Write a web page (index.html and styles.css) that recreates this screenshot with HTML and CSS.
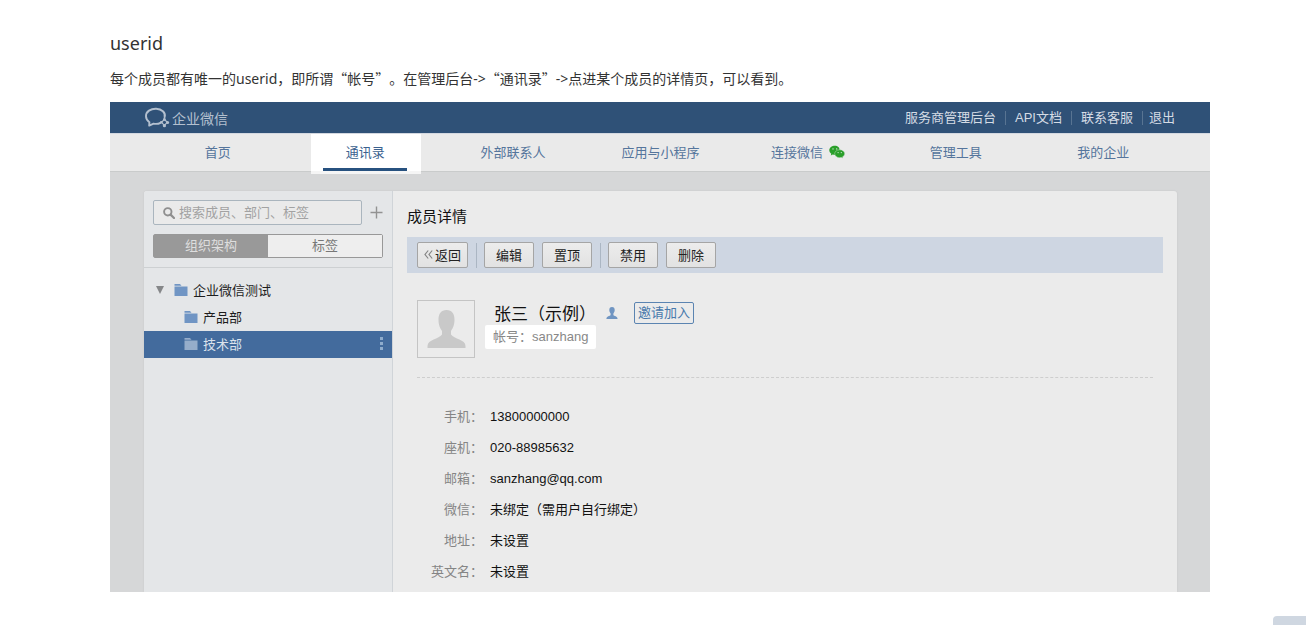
FILE: index.html
```html
<!DOCTYPE html>
<html lang="zh-CN">
<head>
<meta charset="utf-8">
<title>userid</title>
<link rel="stylesheet" href="styles.css">
</head>
<body>
<article class="doc">
  <h1 class="doc-title">userid</h1>
  <p class="doc-text">每个成员都有唯一的<span class="latin">userid</span>，即所谓“帐号”。在管理后台<span class="latin">-&gt;</span>“通讯录”<span class="latin">-&gt;</span>点进某个成员的详情页，可以看到。</p>

  <section class="console">
    <header class="topbar">
      <div class="logo">
        <svg class="logo-icon" viewBox="0 0 26 22" width="26" height="22" aria-hidden="true">
          <path d="M16.500 15.800C14.500 16.900 12 17.100 9.600 16.700L5.200 18.600L5.400 15.200C.9 12.200 .9 6.400 5 3.600C9 1 15.500 1.100 18.900 4.300C20.700 6 21.300 8.300 20.600 10.300" fill="none" stroke="currentColor" stroke-width="1.900" stroke-linejoin="round" stroke-linecap="round"/>
          <path d="M20.500 12.400L23.200 15.300L20.500 18.300L17.500 15.300Z" fill="none" stroke="currentColor" stroke-width="1.200"/>
          <g fill="currentColor"><circle cx="20.400" cy="12.500" r="1.400"/><circle cx="23.600" cy="15.400" r="1.500"/><circle cx="20.400" cy="18.700" r="1.600"/><circle cx="17.200" cy="15.300" r="1.300"/></g>
        </svg>
        <span>企业微信</span>
      </div>
      <nav class="links">
        <a href="#">服务商管理后台</a><a href="#">API文档</a><a href="#">联系客服</a><a href="#">退出</a>
      </nav>
    </header>

    <nav class="tabs">
      <a class="tab" href="#">首页</a>
      <a class="tab active" href="#"><span class="tab-label">通讯录</span></a>
      <a class="tab" href="#">外部联系人</a>
      <a class="tab" href="#">应用与小程序</a>
      <a class="tab" href="#">连接微信
        <svg viewBox="0 0 16 14" width="16" height="14" aria-hidden="true">
          <path d="M6 .8C2.700.8.300 2.800.300 5.300C.300 6.800 1.100 8 2.300 8.800L1.800 10.500L3.700 9.500L6 9.900L10.500 5C10.700 2.700 8.700.8 6 .8Z" fill="#2a9f2a"/>
          <path d="M10.700 4.800C7.900 4.800 5.700 6.500 5.700 8.700C5.700 11 8 12.700 10.700 12.700L12.400 12.400L14 13.300L13.600 11.800C14.900 11 15.700 9.900 15.700 8.700C15.700 6.500 13.500 4.800 10.700 4.800Z" fill="#2a9f2a" stroke="#eaeaea" stroke-width=".4"/>
          <g fill="#dceadc"><circle cx="4" cy="3.900" r=".7"/><circle cx="7.700" cy="3.900" r=".7"/><circle cx="9.100" cy="7.600" r=".6"/><circle cx="12.300" cy="7.600" r=".6"/></g>
        </svg>
      </a>
      <a class="tab" href="#">管理工具</a>
      <a class="tab" href="#">我的企业</a>
    </nav>

    <div class="stage">
      <div class="panel">
        <aside class="side">
          <div class="side-head">
            <div class="search-row">
              <label class="search">
                <svg viewBox="0 0 12 12" width="12" height="12" aria-hidden="true"><circle cx="4.800" cy="4.800" r="3.700" fill="none" stroke="#8f8f8f" stroke-width="1.900"/><path d="M7.600 7.600L11 11" stroke="#8f8f8f" stroke-width="2.200" stroke-linecap="round"/></svg>
                <input type="text" placeholder="搜索成员、部门、标签" aria-label="搜索成员、部门、标签">
              </label>
              <button class="add" type="button" aria-label="添加"><svg viewBox="0 0 13 13" width="13" height="13"><path d="M6.500 .5V12.500M.5 6.500H12.500" stroke="#929292" stroke-width="1.400"/></svg></button>
            </div>
            <div class="segment">
              <button class="seg on" type="button">组织架构</button><button class="seg" type="button">标签</button>
            </div>
          </div>
          <ul class="tree">
            <li class="node root">
              <svg class="caret" viewBox="0 0 8 8" width="8" height="8" aria-hidden="true"><path d="M0 0H8L4 8Z" fill="#858789"/></svg>
              <svg class="folder" viewBox="0 0 14 12" width="14" height="12" aria-hidden="true"><path d="M.5 0H6L7.500 1.800H.5ZM.5 2.600H13.500V12H.5Z"/></svg>
              <span>企业微信测试</span>
            </li>
            <li class="node">
              <svg class="folder" viewBox="0 0 14 12" width="14" height="12" aria-hidden="true"><path d="M.5 0H6L7.500 1.800H.5ZM.5 2.600H13.500V12H.5Z"/></svg>
              <span>产品部</span>
            </li>
            <li class="node selected">
              <svg class="folder" viewBox="0 0 14 12" width="14" height="12" aria-hidden="true"><path d="M.5 0H6L7.500 1.800H.5ZM.5 2.600H13.500V12H.5Z"/></svg>
              <span>技术部</span>
              <button class="more" type="button" aria-label="更多"><svg viewBox="0 0 3 13" width="3" height="13"><path d="M0 0H3V3H0ZM0 5H3V8H0ZM0 10H3V13H0Z" fill="#8faccc"/></svg></button>
            </li>
          </ul>
        </aside>

        <main class="detail">
          <h2 class="detail-title">成员详情</h2>
          <div class="toolbar">
            <button class="btn" type="button"><svg viewBox="0 0 9 9" width="9" height="9" aria-hidden="true"><path d="M4.200 .5L1 4.500L4.200 8.500M8.200 .5L5 4.500L8.200 8.500" fill="none" stroke="#858585" stroke-width="1.200"/></svg>返回</button>
            <i class="bar"></i>
            <button class="btn" type="button">编辑</button>
            <button class="btn" type="button">置顶</button>
            <i class="bar"></i>
            <button class="btn" type="button">禁用</button>
            <button class="btn" type="button">删除</button>
          </div>
          <div class="profile">
            <div class="avatar"><svg viewBox="0 0 56 56" width="56" height="56" aria-hidden="true"><path d="M28.500 9C34 9 36.500 13 36.500 18.500C36.500 24 35 27 33 30V33.500C36 38 47.500 38.500 47.500 45V47H9.500V45C9.500 38.500 21 38 24 33.500V30C22 27 20.500 24 20.500 18.500C20.500 13 23 9 28.500 9Z" fill="#c9c9c9"/></svg></div>
            <div class="who">
              <div class="name-row">
                <span class="name">张三（示例）</span>
                <svg viewBox="0 0 12 12" width="12" height="12" aria-hidden="true"><path d="M6 0C7.900 0 8.700 1.300 8.700 3C8.700 4.800 8 5.700 7.400 6.500V8C8 9.300 11.600 9 11.600 12H.4C.4 9 4 9.300 4.600 8V6.500C4 5.700 3.300 4.800 3.300 3C3.300 1.300 4.100 0 6 0Z" fill="#7095c2"/></svg>
                <button class="invite" type="button">邀请加入</button>
              </div>
              <div class="account">帐号：sanzhang</div>
            </div>
          </div>
          <dl class="info">
            <dt>手机：</dt><dd>13800000000</dd>
            <dt>座机：</dt><dd>020-88985632</dd>
            <dt>邮箱：</dt><dd>sanzhang@qq.com</dd>
            <dt>微信：</dt><dd>未绑定（需用户自行绑定）</dd>
            <dt>地址：</dt><dd>未设置</dd>
            <dt>英文名：</dt><dd>未设置</dd>
          </dl>
        </main>
      </div>
    </div>
  </section>
</article>
<button class="corner" type="button" aria-label="反馈"></button>
</body>
</html>
```

FILE: styles.css
```css
* { box-sizing: border-box; }
body {
  margin: 0;
  background: #fff;
  color: #333;
  font-family: "Liberation Sans", "Noto Sans CJK SC", sans-serif;
  font-size: 13px;
}
a { color: inherit; text-decoration: none; }
button, input { font: inherit; color: inherit; padding: 0; margin: 0; border: 0; background: none; }
svg { display: block; flex: none; }

.doc { padding: 30px 96px 0 110px; }
.doc-title {
  margin: 0;
  font: 400 18px/26px "Noto Sans", sans-serif;
}
.doc-text {
  margin: 11px 0 12px;
  font: 14px/22px "Noto Sans CJK SC", sans-serif;
  text-spacing-trim: space-all;
}
.latin { font-family: "Noto Sans", sans-serif; }

.console { background: #d6d7d8; }

.topbar {
  display: flex;
  justify-content: space-between;
  align-items: center;
  height: 31px;
  padding: 0 35px 0 34px;
  background: #2f5177;
  color: #d5dce5;
}
.logo { display: flex; align-items: center; gap: 2px; font-size: 14px; color: #b4c0cf; }
.links { display: flex; align-items: center; }
.links a { line-height: 14px; }
.links a + a { margin-left: 9px; padding-left: 9px; border-left: 1px solid #587492; }
.links a:last-child { padding-left: 6px; }

.tabs {
  display: flex;
  height: 39px;
  padding: 0 33px 0 34px;
  background: #eaeaea;
  border-top: 1px solid #d3d8e0;
  border-bottom: 1px solid #c9cbcb;
  color: #55759c;
}
.tab { flex: 1; display: flex; justify-content: center; align-items: center; gap: 6px; padding-bottom: 2px; }
.tab.active { padding: 0; color: #3b628f; }
.tab-label {
  z-index: 1;
  display: flex;
  justify-content: center;
  align-items: center;
  width: 84px;
  height: 37px;
  border-bottom: 3px solid #27517f;
  padding-top: 1px;
  background: #fff;
  box-shadow: 14px 0 #fff, -12px 0 #fff, 14px 3px #f5f5f5, -12px 3px #f5f5f5;
}

.stage { padding: 19px 33px 0 34px; }
.panel {
  display: flex;
  background: #ebebeb;
  border-radius: 3px 3px 0 0;
  box-shadow: 0 0 2px #c4c5c6;
}
.side {
  width: 249px;
  border-right: 1px solid #d0d4d8;
  border-radius: 3px 0 0 0;
  background: #e4e6e8;
}
.side-head { padding: 9px; border-bottom: 1px solid #cdd0d2; }
.search-row { display: flex; align-items: center; gap: 8px; }
.search {
  display: flex;
  align-items: center;
  gap: 4px;
  width: 209px;
  height: 25px;
  padding-left: 9px;
  border: 1px solid #aab5be;
  border-radius: 2px;
  background: #eaeaea;
}
.search input { flex: 1; min-width: 0; outline: 0; }
.search input::placeholder { color: #a2a2a2; opacity: 1; }
.segment {
  display: flex;
  height: 24px;
  margin-top: 9px;
  border: 1px solid #989898;
  border-radius: 2px;
}
.seg { flex: 1; line-height: 22px; color: #777; background: #eee; }
.seg.on { background: #999; color: #dedede; }

.tree { margin: 0; padding: 9px 0 0; list-style: none; }
.node {
  display: flex;
  align-items: center;
  gap: 5px;
  height: 27px;
  padding: 0 9px 2px 40px;
  color: #1d1d1d;
}
.root { padding-left: 12px; }
.caret { margin-right: 5px; }
.folder { fill: #7095c4; }
.selected { background: #436b9d; color: #dbe2eb; }
.selected .folder { fill: #96adca; }
.more { margin-left: auto; }

.detail { flex: 1; padding: 15px 14px 5px; }
.detail-title { margin: 0; color: #111; font-size: 15px; font-weight: 400; line-height: 22px; }
.toolbar {
  display: flex;
  align-items: center;
  gap: 8px;
  height: 36px;
  margin-top: 9px;
  padding: 0 10px;
  background: #ced6e2;
}
.btn {
  display: flex;
  justify-content: center;
  align-items: center;
  gap: 2px;
  min-width: 50px;
  height: 26px;
  border: 1px solid #a5a5a5;
  border-radius: 2px;
  background: linear-gradient(#ececec, #e2e2e2);
  color: #222;
  padding: 0 6px 2px;
}
.bar { width: 0; height: 25px; border-left: 1px solid #abb6c3; margin-right: -1px; }

.profile {
  display: flex;
  margin: 0 10px;
  padding: 27px 0 19px;
  border-bottom: 1px dashed #cecece;
}
.avatar { align-self: flex-start; border: 1px solid #c4c4c4; }
.who { padding-left: 10px; }
.name-row { display: flex; align-items: center; height: 25px; padding-left: 9px; gap: 10px; }
.name { color: #111; font-size: 17px; }
.invite {
  height: 22px;
  margin-left: 6px;
  padding: 0 3px;
  border: 1px solid #5b84b1;
  border-radius: 2px;
  color: #4879ac;
  line-height: 20px;
}
.account {
  width: max-content;
  padding: 0 8px;
  border-radius: 2px;
  background: #fff;
  color: #888;
  line-height: 24px;
}
.info {
  display: grid;
  grid-template-columns: 66px 1fr;
  column-gap: 7px;
  margin: 23px 10px 0;
  line-height: 31px;
}
.info dt { color: #858585; text-align: right; }
.info dd { margin: 0; color: #111; }

.corner {
  position: fixed;
  right: 0;
  bottom: 0;
  width: 33px;
  height: 9px;
  border-radius: 4px 0 0 0;
  background: #cfd7e1;
}
```
